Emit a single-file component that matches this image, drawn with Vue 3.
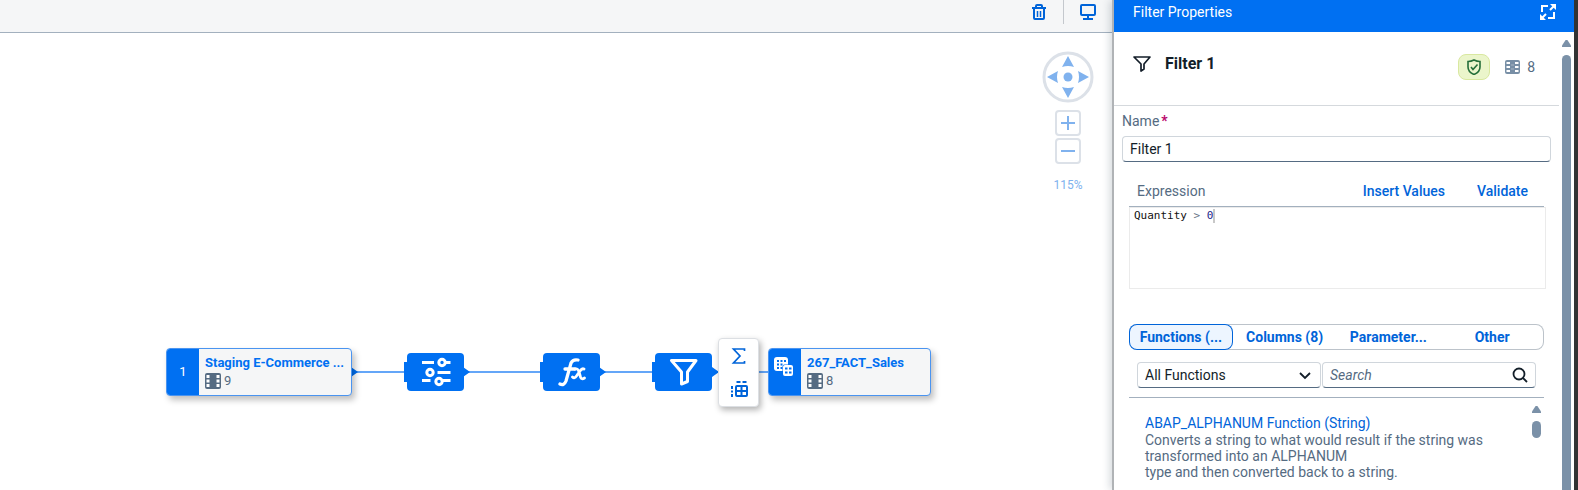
<script setup>
import { ref } from 'vue'

const name = ref('Filter 1')
const scope = ref('All Functions')
const search = ref('')
const active = ref(0)
const tabs = ['Functions (...', 'Columns (8)', 'Parameter...', 'Other']
</script>

<template>
  <div class="app">
    <main class="work">
      <header class="toolbar">
        <button class="tool" aria-label="Delete">
          <svg width="16" height="16" viewBox="0 0 16 16" fill="none" stroke="#0064d9" stroke-width="2">
            <path d="M1 4h14M3 4v10q0 1 1 1h8q1 0 1-1V4M5 4V2q0-1 1-1h4q1 0 1 1v2" />
            <path d="M6.500 7v6M9.500 7v6" stroke-width="1.500" />
          </svg>
        </button>
        <span class="divider"></span>
        <button class="tool" aria-label="Preview">
          <svg width="16" height="16" viewBox="0 0 16 16" fill="none" stroke="#0064d9" stroke-width="2">
            <rect x="1" y="1" width="14" height="10" rx="1" />
            <path d="M8 11v4M3 15h10" />
          </svg>
        </button>
      </header>

      <section class="canvas">
        <svg class="links" width="940" height="400" viewBox="0 0 940 400">
          <path d="M351 339H404M464 339H540M600 339H652M713 339H769" stroke="#64a6f8" stroke-width="2" />
          <path d="M351 334l7 5-7 5zM463 334l7 5-7 5zM599 334l7 5-7 5zM712 334l7 5-7 5z" fill="#0070f2" />
          <path d="M404 329h5v20h-5zM540 329h5v20h-5zM652 329h5v20h-5z" fill="#0070f2" />
        </svg>

        <article class="node source">
          <div class="badge">1</div>
          <div class="body">
            <strong>Staging E-Commerce ...</strong>
            <span class="count">
              <svg width="16" height="16" viewBox="0 0 16 16"><rect width="16" height="16" rx="2" fill="#556b82" /><path d="M1.500 2h3v3h-3zM1.500 6.500h3v3h-3zM1.500 11h3v3h-3zM11.500 2h3v3h-3zM11.500 6.500h3v3h-3zM11.500 11h3v3h-3z" fill="#fff" /></svg>
              9
            </span>
          </div>
        </article>

        <div class="step projection">
          <svg width="30" height="30" viewBox="0 0 30 30" fill="none" stroke="#fff" stroke-width="3">
            <path d="M1 5.500h12M24.500 5.500h5M16.500 15.500h13M1 23.500h8.500M22 23.500h7.500" />
            <circle cx="21" cy="5.500" r="3.200" />
            <circle cx="9" cy="15.500" r="3.200" />
            <circle cx="18" cy="24.500" r="3.200" />
          </svg>
        </div>
        <div class="step formula">
          <svg width="28" height="30" viewBox="0 0 28 30" fill="none" stroke="#fff" stroke-width="3.300" stroke-linecap="round">
            <path d="M2 27q4 2 6-3l5-18q2-4 7-3M7 12h10" />
            <path d="M17 12q3-1 4 3l1.500 5q1 3 4 1M26 12q-2-1-4 2l-3.500 5q-2 3-4 1" stroke-width="2.800" />
          </svg>
        </div>
        <div class="step filter">
          <svg width="30" height="28" viewBox="0 0 30 28" fill="none" stroke="#fff" stroke-width="3" stroke-linejoin="round">
            <path d="M2.500 2.500H27L18.500 14v9.500l-6 2.500V14z" />
          </svg>
        </div>

        <div class="menu">
          <button aria-label="Aggregation">
            <svg width="16" height="18" viewBox="0 0 16 18" fill="none" stroke="#0064d9" stroke-width="1.700">
              <path d="M13.500 4V2H2.500l6.500 7-6.500 7h11v-2" />
            </svg>
          </button>
          <button aria-label="Add table">
            <svg width="18" height="18" viewBox="0 0 18 18" fill="none" stroke="#0064d9" stroke-width="2">
              <rect x="6" y="6" width="11" height="10" rx="1" />
              <path d="M11.500 6v10M6 11h11M6.500 2h4M12.500 2h4" />
              <path d="M2 6v3M2 10.500v2M2 14v3" />
            </svg>
          </button>
        </div>

        <article class="node target">
          <div class="badge top">
            <svg width="19" height="19" viewBox="0 0 19 19">
              <rect x="0" y="0" width="14" height="14" rx="3" fill="#fff" />
              <path d="M3 3h2v2H3zM6.500 3h2v2h-2zM10 3h2v2h-2zM3 6.500h2v2H3zM6.500 6.500h2v2h-2zM3 10h2v2H3zM6.500 10h2v2h-2z" fill="#0070f2" />
              <rect x="8.500" y="7.500" width="11" height="12" rx="2" fill="#0070f2" />
              <rect x="9" y="8" width="10" height="11" rx="2" fill="#fff" />
              <path d="M11 10.500h2.500v2H11zM15 10.500h2.500v2H15zM11 14.500h2.500v2H11zM15 14.500h2.500v2H15z" fill="#0070f2" />
            </svg>
          </div>
          <div class="body">
            <strong>267_FACT_Sales</strong>
            <span class="count">
              <svg width="16" height="16" viewBox="0 0 16 16"><rect width="16" height="16" rx="2" fill="#556b82" /><path d="M1.500 2h3v3h-3zM1.500 6.500h3v3h-3zM1.500 11h3v3h-3zM11.500 2h3v3h-3zM11.500 6.500h3v3h-3zM11.500 11h3v3h-3z" fill="#fff" /></svg>
              8
            </span>
          </div>
        </article>

        <div class="nav">
          <svg width="52" height="52" viewBox="0 0 52 52">
            <circle cx="26" cy="26" r="24" fill="#fff" stroke="#dce1e8" stroke-width="3" />
            <circle cx="26" cy="26" r="4.500" fill="#80b2ee" />
            <path d="M26 5l6 11q-6-2-12 0zM26 47l6-11q-6 2-12 0zM5 26l11-6q-2 6 0 12zM47 26l-11-6q2 6 0 12z" fill="#80b2ee" />
          </svg>
          <button class="zoom" aria-label="Zoom in">
            <svg width="16" height="16" viewBox="0 0 16 16"><path d="M8 1v14M1 8h14" stroke="#80b2ee" stroke-width="2" /></svg>
          </button>
          <button class="zoom" aria-label="Zoom out">
            <svg width="16" height="16" viewBox="0 0 16 16"><path d="M1 8h14" stroke="#80b2ee" stroke-width="2" /></svg>
          </button>
          <span class="level">115%</span>
        </div>
      </section>
    </main>

    <aside class="panel">
      <header class="bar">
        <span>Filter Properties</span>
        <button aria-label="Full screen">
          <svg width="16" height="16" viewBox="0 0 16 16" fill="none" stroke="#fff" stroke-width="2">
            <path d="M2 8V2h6M14 8v6H8" />
            <path d="M10 6l4-4M6 10l-4 4" />
            <path d="M10 0h6v6zM0 10v6h6z" fill="#fff" stroke="none" />
          </svg>
        </button>
      </header>
      <div class="scroll">
        <div class="content">
          <div class="title">
            <svg width="18" height="16" viewBox="0 0 18 16" fill="none" stroke="#131e29" stroke-width="1.700" stroke-linejoin="round">
              <path d="M1 1h16l-6 7v5l-3 2V8z" />
            </svg>
            <h1>Filter 1</h1>
            <span class="status">
              <svg width="16" height="16" viewBox="0 0 16 16" fill="none" stroke="#256f3a">
                <path d="M8 1q3 1.500 6 1.500V8q0 5-6 7.500Q2 13 2 8V2.500Q5 2.500 8 1z" stroke-width="1.600" />
                <path d="M5 8l2 2.500 4.500-5" stroke-width="1.600" />
              </svg>
            </span>
            <span class="cols">
              <svg width="15" height="14" viewBox="0 0 15 14"><rect width="15" height="14" rx="2" fill="#788fa6" /><path d="M1.500 2h3.500v2h-3.500zM1.500 6h3.500v2h-3.500zM1.500 10h3.500v2h-3.500zM10 2h3.500v2H10zM10 6h3.500v2H10zM10 10h3.500v2H10z" fill="#fff" /><path d="M6 5h3M6 9h3" stroke="#a9b6c4" /></svg>
              8
            </span>
          </div>

          <div class="field">
            <label for="name">Name<b>*</b></label>
            <input id="name" v-model="name" type="text" />
          </div>

          <section class="expression">
            <div class="exprbar">
              <span id="expr-label">Expression</span>
              <button>Insert Values</button>
              <button>Validate</button>
            </div>
            <div class="editor" role="textbox" contenteditable="true" aria-labelledby="expr-label"><span>Quantity <i>&gt;</i> <em>0</em></span><span class="caret"></span></div>
          </section>

          <section class="library">
            <div class="tabs">
              <button v-for="(t, i) in tabs" :key="t" :class="{ on: active === i }" @click="active = i">{{ t }}</button>
            </div>
            <div class="find">
              <div class="pick">
                <select v-model="scope" aria-label="Category"><option>All Functions</option></select>
                <svg width="12" height="8" viewBox="0 0 12 8" fill="none" stroke="#131e29" stroke-width="1.800"><path d="M1 1l5 5 5-5" /></svg>
              </div>
              <div class="query">
                <input v-model="search" type="text" placeholder="Search" aria-label="Search" />
                <svg width="16" height="16" viewBox="0 0 16 16" fill="none" stroke="#131e29" stroke-width="1.800"><circle cx="7" cy="7" r="5.500" /><path d="M11 11l4 4" /></svg>
              </div>
            </div>
            <div class="list">
              <div class="entry">
                <a href="#">ABAP_ALPHANUM Function (String)</a>
                <p>Converts a string to what would result if the string was transformed into an ALPHANUM<br />type and then converted back to a string.</p>
              </div>
              <div class="rail inner"><span class="up"></span><span class="thumb"></span></div>
            </div>
          </section>
        </div>
        <div class="rail"><span class="up"></span><span class="thumb"></span></div>
      </div>
    </aside>
    <div class="edge"></div>
  </div>
</template>

<style>
body {
  margin: 0;
  overflow: hidden;
}
</style>

<style scoped>
* {
  box-sizing: border-box;
}
.app {
  display: flex;
  min-height: 100vh;
  font: 14px/16px Roboto, "Liberation Sans", sans-serif;
  color: #131e29;
  background: #fff;
}
button {
  padding: 0;
  border: 0;
  background: none;
  font: inherit;
  color: #0064d9;
}
svg {
  display: block;
  flex: none;
}
.work {
  flex: 1;
  min-width: 0;
  display: flex;
  flex-direction: column;
}
.toolbar {
  display: flex;
  justify-content: flex-end;
  gap: 16px;
  height: 33px;
  padding-right: 16px;
  background: #f5f6f7;
  border-bottom: 1px solid #a3b0be;
}
.tool {
  width: 16px;
  height: 24px;
}
.divider {
  width: 1px;
  height: 24px;
  background: #c4c8cd;
}
.canvas {
  position: relative;
  flex: 1;
}
.links {
  position: absolute;
  left: 0;
  top: 0;
}
.node {
  position: absolute;
  top: 315px;
  display: flex;
  height: 48px;
  border: 1px solid #4a94f0;
  border-radius: 4px;
  background: #f5f6f7;
  box-shadow: 3px 4px 6px rgba(0, 0, 0, 0.25);
  overflow: hidden;
}
.source {
  left: 166px;
  width: 186px;
}
.target {
  left: 768px;
  width: 163px;
}
.badge {
  flex: none;
  display: flex;
  align-items: center;
  justify-content: center;
  width: 32px;
  background: #0070f2;
  color: #fff;
  font-size: 13px;
}
.top {
  align-items: flex-start;
  justify-content: flex-start;
  padding: 8px 0 0 5px;
}
.body {
  flex: 1;
  padding: 5px 0 0 6px;
  white-space: nowrap;
}
.body strong {
  display: block;
  margin-bottom: 2px;
  line-height: 17px;
  font-size: 13px;
  color: #0070f2;
}
.count {
  display: flex;
  gap: 3px;
  font-size: 13px;
  color: #556b82;
}
.step {
  position: absolute;
  top: 320px;
  width: 57px;
  height: 38px;
  display: flex;
  align-items: center;
  justify-content: center;
  border-radius: 4px;
  background: #0070f2;
}
.projection {
  left: 407px;
}
.formula {
  left: 543px;
}
.filter {
  left: 655px;
}
.menu {
  position: absolute;
  left: 718px;
  top: 305px;
  width: 41px;
  height: 69px;
  display: flex;
  flex-direction: column;
  border: 1px solid #dcdfe3;
  border-radius: 4px;
  background: #fff;
  box-shadow: 2px 3px 6px rgba(0, 0, 0, 0.3);
}
.menu button {
  flex: 1;
  display: flex;
  align-items: center;
  justify-content: center;
}
.nav {
  position: absolute;
  right: 18px;
  top: 18px;
  width: 52px;
  display: flex;
  flex-direction: column;
  align-items: center;
  gap: 2px;
}
.zoom {
  display: flex;
  align-items: center;
  justify-content: center;
  width: 26px;
  height: 26px;
  border: 2px solid #dce1e8;
  border-radius: 4px;
  background: #fff;
}
.nav svg + .zoom {
  margin-top: 5px;
}
.level {
  margin-top: 11px;
  font-size: 12px;
  color: #80b2ee;
}
.panel {
  position: relative;
  width: 462px;
  display: flex;
  flex-direction: column;
  border-left: 2px solid #b0b3b6;
  background: #fff;
  box-shadow: -2px 0 8px rgba(34, 54, 73, 0.2);
}
.bar {
  display: flex;
  justify-content: space-between;
  height: 32px;
  padding: 4px 18px 0 19px;
  background: #0070f2;
  color: #fff;
}
.bar button {
  height: 16px;
}
.scroll {
  flex: 1;
  display: flex;
}
.content {
  flex: 1;
  min-width: 0;
}
.title {
  display: flex;
  align-items: flex-start;
  height: 74px;
  padding: 24px 24px 0 19px;
  border-bottom: 1px solid #d5d9dd;
}
.title h1 {
  flex: 1;
  margin: 0 0 0 14px;
  font-size: 16px;
  line-height: 16px;
}
.status {
  display: flex;
  align-items: center;
  justify-content: center;
  width: 32px;
  height: 26px;
  margin-top: -2px;
  border: 1px solid #d9e8a0;
  border-radius: 8px;
  background: #ebf5cb;
}
.cols {
  display: flex;
  align-items: center;
  gap: 7px;
  margin: 3px 0 0 15px;
  color: #556b82;
}
.field {
  padding: 7px 8px 0;
}
.field label {
  display: block;
  line-height: 16px;
  color: #556b82;
}
.field b {
  margin-left: 2px;
  color: #ba066c;
}
input,
select {
  display: block;
  width: 100%;
  height: 26px;
  padding: 0 7px;
  border: 1px solid #d0d6dc;
  border-bottom-color: #556b82;
  border-radius: 4px;
  background: #fff;
  color: #131e29;
  font: inherit;
  appearance: none;
}
.field input {
  margin-top: 7px;
}
input::placeholder {
  color: #556b82;
  font-style: italic;
  opacity: 1;
}
.expression {
  padding: 15px 13px 0 15px;
}
.exprbar {
  display: flex;
  align-items: center;
  gap: 32px;
  height: 30px;
  margin-right: 2px;
  padding: 0 16px 2px 8px;
  border-bottom: 1px solid #a3b0be;
}
.exprbar span {
  flex: 1;
  color: #556b82;
}
.exprbar button {
  font-weight: 500;
}
.editor {
  display: flex;
  height: 82px;
  padding: 1px 4px;
  border: 1px solid #ebebeb;
  font: 11px/14px "DejaVu Sans Mono", monospace;
  white-space: pre;
  color: #111;
  outline: none;
}
.editor i {
  font-style: normal;
  color: #687687;
}
.editor em {
  font-style: normal;
  color: #1c1c8a;
}
.caret {
  width: 2px;
  height: 14px;
  background: #c8c8c8;
}
.library {
  padding: 35px 15px 0;
}
.tabs {
  display: flex;
  height: 26px;
  border-radius: 8px;
  box-shadow: inset 0 0 0 1px #bcc3ca;
}
.tabs button {
  flex: 1;
  border-radius: 8px;
  font-weight: 700;
}
.tabs .on {
  background: #edf5ff;
  box-shadow: inset 0 0 0 1px #0064d9;
}
.find {
  display: flex;
  gap: 1px;
  padding: 12px 8px 9px;
  border-bottom: 1px solid #a3b0be;
}
.pick,
.query {
  position: relative;
  flex: 184;
}
.query {
  flex: 214;
}
.pick svg {
  position: absolute;
  right: 10px;
  top: 10px;
}
.query svg {
  position: absolute;
  right: 8px;
  top: 5px;
}
.list {
  display: flex;
  height: 92px;
  overflow: hidden;
}
.entry {
  flex: 1;
  padding: 17px 32px 0 16px;
}
.entry a {
  display: block;
  line-height: 17px;
  color: #0064d9;
  text-decoration: none;
}
.entry p {
  margin: 0;
  color: #556b82;
}
.rail {
  display: flex;
  flex-direction: column;
  gap: 8px;
  width: 15px;
  padding: 8px 3px 0;
}
.up {
  height: 7px;
  background: #7b91a8;
  clip-path: polygon(40% 0, 60% 0, 100% 80%, 100% 100%, 0 100%, 0 80%);
}
.thumb {
  flex: 1;
  border-radius: 5px 5px 0 0;
  background: #7b91a8;
}
.inner .thumb {
  flex: none;
  height: 17px;
  border-radius: 5px;
}
.edge {
  width: 4px;
  background: #333;
}
</style>
